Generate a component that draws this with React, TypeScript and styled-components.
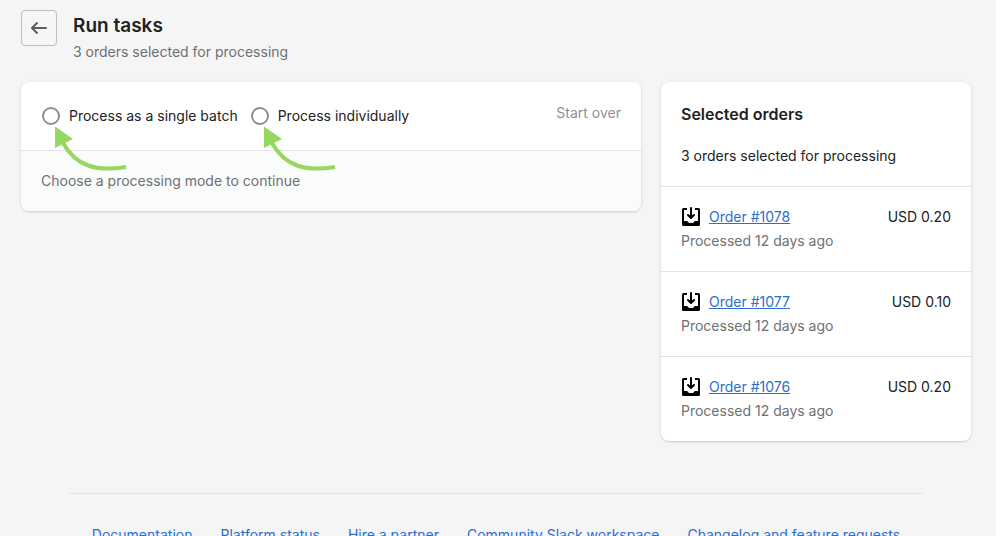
import React from "react";
import styled, { createGlobalStyle } from "styled-components";

const GlobalStyle = createGlobalStyle`
  *, *::before, *::after { box-sizing: border-box; }
  html { scrollbar-width: none; }
  body {
    margin: 0;
    background: #f5f5f5;
    color: #202223;
    font-family: Inter, "Liberation Sans", sans-serif;
    font-size: 14px;
    line-height: 20px;
  }
  h1, h2, p, ul { margin: 0; padding: 0; }
`;

const Page = styled.div`
  padding: 10px 25px 20px 21px;
`;

const Header = styled.header`
  display: flex;
  align-items: flex-start;
  gap: 16px;
  height: 72px;
`;

const BackButton = styled.button`
  display: flex;
  align-items: center;
  justify-content: center;
  width: 36px;
  height: 36px;
  padding: 0;
  background: transparent;
  border: 1px solid #babfc3;
  border-radius: 4px;
  cursor: pointer;
`;

const Title = styled.h1`
  padding-top: 2px;
  font-size: 19px;
  font-weight: 600;
  line-height: 28px;
`;

const Muted = styled.p`
  color: #6d7175;
`;

const HeaderNote = styled(Muted)`
  padding-top: 2px;
`;

const Columns = styled.main`
  display: grid;
  grid-template-columns: 2fr 1fr;
  align-items: start;
  gap: 20px;
`;

const Card = styled.section`
  background: #fff;
  border-radius: 8px;
  box-shadow: 0 0 5px rgba(23, 24, 24, 0.05), 0 1px 2px rgba(0, 0, 0, 0.15);
`;

const CardSection = styled.div<{ $subdued?: boolean }>`
  padding: 20px;
  background: ${(p) => (p.$subdued ? "#fafbfb" : "transparent")};
  border-radius: ${(p) => (p.$subdued ? "0 0 8px 8px" : "0")};

  & + & {
    border-top: 1px solid #e1e3e5;
  }
`;

const ModeRow = styled(CardSection)`
  display: flex;
  align-items: flex-start;
  justify-content: space-between;
`;

const Modes = styled.div`
  display: flex;
  gap: 12px;
`;

const ModeLabel = styled.label`
  position: relative;
  display: flex;
  align-items: center;
  gap: 8px;
  padding: 4px 0;
  cursor: pointer;
`;

const Radio = styled.input`
  appearance: none;
  width: 18px;
  height: 18px;
  margin: 0 1px;
  background: #fff;
  border: 2px solid #8c9196;
  border-radius: 50%;

  &:checked {
    border: 5px solid #2c6ecb;
  }
`;

const Pointer = styled.svg`
  position: absolute;
  top: 24px;
  left: 13px;
  pointer-events: none;
`;

const PlainButton = styled.button`
  padding: 1px 0 0;
  background: none;
  border: 0;
  color: #8c9196;
  font: inherit;
`;

const SideHeading = styled.h2`
  padding-bottom: 20px;
  font-size: 16px;
  font-weight: 600;
  line-height: 24px;
`;

const OrderLine = styled.div`
  display: flex;
  align-items: center;
  gap: 8px;
  margin-bottom: 4px;
`;

const Link = styled.a`
  color: #2c6ecb;
`;

const Price = styled.span`
  margin-left: auto;
`;

const Footer = styled.footer`
  margin: 52px 48px 0;
  padding-top: 31px;
  border-top: 1px solid #e1e3e5;
`;

const FooterLinks = styled.nav`
  display: flex;
  flex-wrap: wrap;
  justify-content: center;
  gap: 8px 28px;

  a {
    text-decoration: none;
  }
`;

const BackIcon = () => (
  <svg width="20" height="20" viewBox="0 0 20 20" fill="#5c5f62" aria-hidden="true">
    <path d="M17 9H5.414l3.293-3.293a.999.999 0 1 0-1.414-1.414l-5 5a.999.999 0 0 0 0 1.414l5 5a.997.997 0 0 0 1.414 0 .999.999 0 0 0 0-1.414L5.414 11H17a1 1 0 1 0 0-2z" />
  </svg>
);

const OrderIcon = () => (
  <svg width="20" height="20" viewBox="0 0 20 20" aria-hidden="true">
    <path d="M11 1a1 1 0 1 0-2 0v7.586L7.707 7.293a1 1 0 0 0-1.414 1.414l3 3a1 1 0 0 0 1.414 0l3-3a1 1 0 0 0-1.414-1.414L11 8.586V1z" />
    <path d="M3 14V3h3V1H2.500A1.500 1.500 0 0 0 1 2.500v15A1.500 1.500 0 0 0 2.500 19h15a1.500 1.500 0 0 0 1.500-1.500v-15A1.500 1.500 0 0 0 17.500 1H14v2h3v11h-2.500c-.8 0-1.200.5-1.600 1-.3.500-.7 1-1.400 1h-3c-.7 0-1.100-.5-1.400-1-.4-.5-.8-1-1.600-1H3z" />
  </svg>
);

const GreenPointer = () => (
  <Pointer width="76" height="48" viewBox="0 0 76 48" aria-hidden="true">
    <path d="M1 0.500 L19 13 L1 22 Z" fill="#97d65f" />
    <path d="M9 17 C22 40 42 46 72 41" fill="none" stroke="#97d65f" strokeWidth="4" />
  </Pointer>
);

const modes = ["Process as a single batch", "Process individually"];

const orders = [
  { name: "Order #1078", price: "USD 0.20" },
  { name: "Order #1077", price: "USD 0.10" },
  { name: "Order #1076", price: "USD 0.20" },
];

const footerLinks = [
  "Documentation",
  "Platform status",
  "Hire a partner",
  "Community Slack workspace",
  "Changelog and feature requests",
];

export default function App() {
  return (
    <Page>
      <GlobalStyle />
      <Header>
        <BackButton type="button" aria-label="Back">
          <BackIcon />
        </BackButton>
        <div>
          <Title>Run tasks</Title>
          <HeaderNote>3 orders selected for processing</HeaderNote>
        </div>
      </Header>
      <Columns>
        <Card>
          <ModeRow>
            <Modes>
              {modes.map((mode) => (
                <ModeLabel key={mode}>
                  <Radio type="radio" name="mode" />
                  {mode}
                  <GreenPointer />
                </ModeLabel>
              ))}
            </Modes>
            <PlainButton type="button" disabled>
              Start over
            </PlainButton>
          </ModeRow>
          <CardSection $subdued>
            <Muted>Choose a processing mode to continue</Muted>
          </CardSection>
        </Card>
        <Card>
          <CardSection>
            <SideHeading>Selected orders</SideHeading>
            <p>3 orders selected for processing</p>
          </CardSection>
          {orders.map((order) => (
            <CardSection key={order.name}>
              <OrderLine>
                <OrderIcon />
                <Link href="#">{order.name}</Link>
                <Price>{order.price}</Price>
              </OrderLine>
              <Muted>Processed 12 days ago</Muted>
            </CardSection>
          ))}
        </Card>
      </Columns>
      <Footer>
        <FooterLinks>
          {footerLinks.map((label) => (
            <Link key={label} href="#">
              {label}
            </Link>
          ))}
        </FooterLinks>
      </Footer>
    </Page>
  );
}
